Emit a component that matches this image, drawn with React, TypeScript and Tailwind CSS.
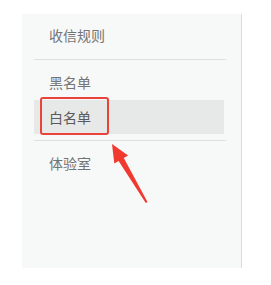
const font = { fontFamily: '"Noto Sans CJK SC", "Noto Sans", sans-serif' }

export default function App() {
  return (
    <div className="relative w-[271px] h-[285px] bg-white" style={font}>
      <div className="absolute left-[22px] top-[14px] w-[220px] h-[254px] bg-[#f7f8f8] border-r border-[#dcdcdc] pl-[12px] pr-[15px]">
        <div className="h-[45px] pt-[11px] pl-[15px] text-[14px] leading-[20px] text-[#747474]">收信规则</div>
        <div className="h-px bg-[#dde0e3]" />
        <div className="h-[40px] pt-[12px] pl-[15px] text-[14px] leading-[20px] text-[#747474]">黑名单</div>
        <div className="relative h-[34px] mr-[2px] bg-[#e7e8e8] pt-[7px] pl-[15px] text-[14px] leading-[20px] text-[#5a5a5a]">
          白名单
          <div className="absolute left-[6px] top-[-3px] w-[69px] h-[38px] border-2 border-[#e8443a] rounded-[3px]" />
        </div>
        <div className="h-[6px]" />
        <div className="h-px bg-[#dde0e3]" />
        <div className="pt-[12px] pl-[15px] text-[14px] leading-[20px] text-[#747474]">体验室</div>
      </div>
      <svg className="absolute left-0 top-0 pointer-events-none" width="271" height="285" viewBox="0 0 271 285">
        <polygon
          points="112,144 128.1,155.4 123.8,158 147.5,202 145.8,203 118.6,161 114.3,163.6"
          fill="#f0392f"
        />
      </svg>
    </div>
  )
}
